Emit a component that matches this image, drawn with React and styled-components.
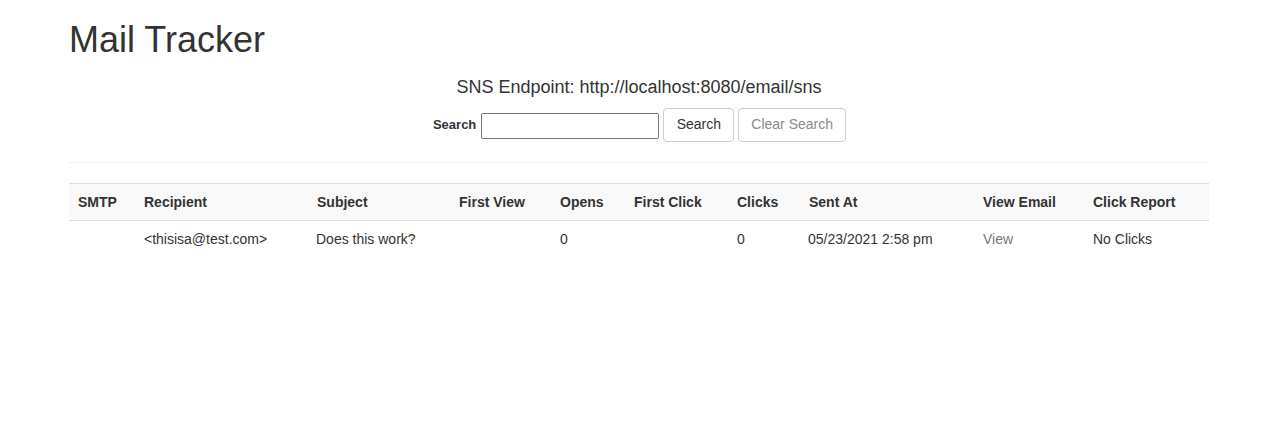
import React from "react";
import styled, { createGlobalStyle } from "styled-components";

const GlobalStyle = createGlobalStyle`
  html, body { margin: 0; padding: 0; background: #fff; }
  body {
    font-family: "Liberation Sans", Arial, Helvetica, sans-serif;
    font-size: 14px;
    line-height: 1.42857;
    color: #333;
  }
  * { box-sizing: border-box; }
`;

const Container = styled.div`
  width: 1170px;
  margin: 0 auto;
  padding: 0 15px;
`;

const Title = styled.h1`
  font-size: 36px;
  font-weight: 400;
  line-height: 1.1;
  margin: 20px 0 0;
  color: #333;
`;

const Center = styled.div`
  display: flex;
  flex-direction: column;
  align-items: center;
`;

const Endpoint = styled.h4`
  font-size: 18px;
  font-weight: 400;
  line-height: 1.1;
  margin: 18px 0 11px;
  color: #333;
`;

const SearchForm = styled.form`
  display: flex;
  align-items: center;
  gap: 4px;
  margin: 0;
  padding-left: 1px;
`;

const Label = styled.label`
  font-weight: 700;
  font-size: 13px;
  margin-right: 1px;
`;

const Input = styled.input`
  width: 178px;
  height: 26px;
  border: 1px solid #767676;
  border-radius: 2px;
  padding: 2px 4px;
  font-family: inherit;
  font-size: 13px;
  margin-top: 1px;
`;

const Button = styled.button`
  height: 34px;
  padding: 6px 12px;
  font-family: inherit;
  font-size: 14px;
  line-height: 1.42857;
  border: 1px solid #ccc;
  border-radius: 4px;
  background: #fff;
  color: ${(p) => (p.$muted ? "#8a8a8a" : "#333")};
  cursor: pointer;
  min-width: ${(p) => (p.$muted ? "auto" : "71px")};
`;

const Rule = styled.hr`
  margin: 20px 0;
  border: 0;
  border-top: 1px solid #f1f1e8;
`;

const Table = styled.table`
  width: 100%;
  border-collapse: collapse;
  table-layout: fixed;
`;

const Th = styled.th`
  text-align: left;
  font-weight: 700;
  padding: 8px;
  padding-left: ${(p) => (p.$first ? "9px" : "8px")};
  line-height: 20px;
  background: #f9f9f9;
  border-top: 1px solid #ddd;
  border-bottom: 1px solid #ddd;
  width: ${(p) => p.$w}px;
`;

const Td = styled.td`
  padding: 8px;
  line-height: 20px;
  padding-left: ${(p) => (p.$tight ? "7px" : "8px")};
`;

const Link = styled.a`
  color: #777;
  text-decoration: none;
`;

const columns = [
  ["SMTP", 67],
  ["Recipient", 173],
  ["Subject", 142],
  ["First View", 101],
  ["Opens", 74],
  ["First Click", 103],
  ["Clicks", 72],
  ["Sent At", 174],
  ["View Email", 110],
  ["Click Report", 124],
];

export default function App() {
  return (
    <>
      <GlobalStyle />
      <Container>
        <Title>Mail Tracker</Title>
        <Center>
          <Endpoint>SNS Endpoint: http://localhost:8080/email/sns</Endpoint>
          <SearchForm onSubmit={(e) => e.preventDefault()}>
            <Label htmlFor="search">Search</Label>
            <Input id="search" type="text" />
            <Button type="submit">Search</Button>
            <Button type="button" $muted>
              Clear Search
            </Button>
          </SearchForm>
        </Center>
        <Rule />
        <Table>
          <thead>
            <tr>
              {columns.map(([name, w], i) => (
                <Th key={name} $w={w} $first={i === 0}>
                  {name}
                </Th>
              ))}
            </tr>
          </thead>
          <tbody>
            <tr>
              <Td></Td>
              <Td>&lt;thisisa@test.com&gt;</Td>
              <Td $tight>Does this work?</Td>
              <Td></Td>
              <Td>0</Td>
              <Td></Td>
              <Td>0</Td>
              <Td $tight>05/23/2021 2:58 pm</Td>
              <Td>
                <Link href="#">View</Link>
              </Td>
              <Td>No Clicks</Td>
            </tr>
          </tbody>
        </Table>
      </Container>
    </>
  );
}
